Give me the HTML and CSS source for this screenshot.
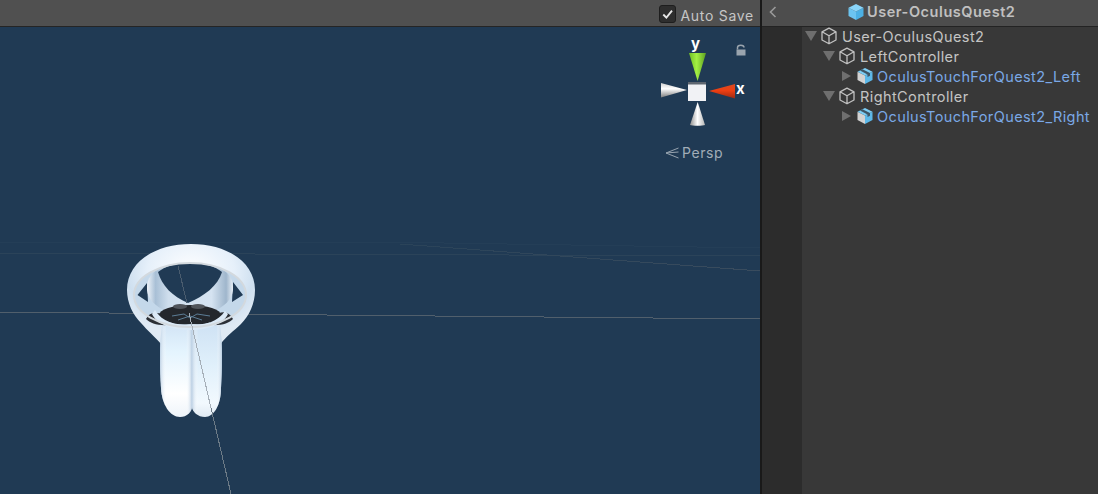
FILE: index.html
```html
<!DOCTYPE html>
<html lang="en">
<head>
<meta charset="utf-8">
<title>User-OculusQuest2</title>
<link rel="stylesheet" href="styles.css">
</head>
<body>
<svg class="defs" width="0" height="0" aria-hidden="true">
  <defs>
    <symbol id="cube" viewBox="0 0 18 18">
      <path d="M9 1.200 16 4.800V13L9 16.800 2 13V4.800Z M2 4.800 9 8.800 16 4.800 M9 8.800V16.800" fill="none" stroke="#c2c2c2" stroke-width="1.300" stroke-linejoin="round"/>
    </symbol>
    <symbol id="prefab" viewBox="0 0 18 18">
      <path d="M9 8.500V17L16.500 13V4.800Z" fill="#5cb8e8"/>
      <path d="M1.500 4.800 9 8.500V17L1.500 13Z" fill="#d2d2d2"/>
      <path d="M1.500 4.800 9 1 16.500 4.800 9 8.500Z" fill="#7ccdf4"/>
      <path d="M4 3.600 11.500 7.400V10L14 8.700V6L6.500 2.300Z" fill="#3d5566"/>
    </symbol>
    <symbol id="prefab-head" viewBox="0 0 18 18">
      <path d="M9 8.500V17L16.500 13V4.800Z" fill="#4cb0e4"/>
      <path d="M1.500 4.800 9 8.500V17L1.500 13Z" fill="#6cc4f0"/>
      <path d="M1.500 4.800 9 1 16.500 4.800 9 8.500Z" fill="#8ad6fa"/>
    </symbol>
    <linearGradient id="fadeLine" gradientUnits="userSpaceOnUse" x1="400" y1="0" x2="760" y2="0">
      <stop offset="0" stop-color="#2a4359"/>
      <stop offset="1" stop-color="#3a4c5e"/>
    </linearGradient>
    <radialGradient id="ringGrad" cx=".5" cy=".28" r=".62">
      <stop offset="0" stop-color="#ffffff"/>
      <stop offset=".55" stop-color="#e6f0fa"/>
      <stop offset=".8" stop-color="#cfe0f0"/>
      <stop offset="1" stop-color="#e0eaf4"/>
    </radialGradient>
    <linearGradient id="bandGrad" x1="0" y1="0" x2="1" y2="0">
      <stop offset="0" stop-color="#eef3f9"/>
      <stop offset=".1" stop-color="#a9c0d6"/>
      <stop offset=".25" stop-color="#cfdeed"/>
      <stop offset=".75" stop-color="#d5e3f1"/>
      <stop offset=".92" stop-color="#9fb6cc"/>
      <stop offset="1" stop-color="#e8eff6"/>
    </linearGradient>
    <linearGradient id="lobeL" x1="0" y1="0" x2="0" y2="1">
      <stop offset="0" stop-color="#d2e4f5"/>
      <stop offset=".3" stop-color="#e4f4fe"/>
      <stop offset=".75" stop-color="#ffffff"/>
      <stop offset="1" stop-color="#eef4fa"/>
    </linearGradient>
    <linearGradient id="lobeSide" x1="0" y1="0" x2="1" y2="0">
      <stop offset="0" stop-color="#c0d3e6"/>
      <stop offset=".2" stop-color="#ffffff" stop-opacity="0"/>
      <stop offset=".82" stop-color="#ffffff" stop-opacity="0"/>
      <stop offset="1" stop-color="#b8cde2"/>
    </linearGradient>
    <linearGradient id="lobeR" x1="0" y1="0" x2="0" y2="1">
      <stop offset="0" stop-color="#cfe2f4"/>
      <stop offset=".45" stop-color="#e0f0fb"/>
      <stop offset=".85" stop-color="#f2f9fe"/>
      <stop offset="1" stop-color="#e0eaf3"/>
    </linearGradient>
    <linearGradient id="coneG" x1="0" y1="0" x2="1" y2="0">
      <stop offset="0" stop-color="#6fbf26"/>
      <stop offset=".45" stop-color="#a3f043"/>
      <stop offset="1" stop-color="#5c9e22"/>
    </linearGradient>
    <linearGradient id="coneR" x1="0" y1="0" x2="0" y2="1">
      <stop offset="0" stop-color="#d84a20"/>
      <stop offset=".45" stop-color="#ee3f12"/>
      <stop offset="1" stop-color="#9c2a12"/>
    </linearGradient>
    <linearGradient id="coneW" x1="0" y1="0" x2="0" y2="1">
      <stop offset="0" stop-color="#cfcfcf"/>
      <stop offset=".4" stop-color="#ffffff"/>
      <stop offset="1" stop-color="#7d7d7d"/>
    </linearGradient>
    <linearGradient id="coneB" x1="0" y1="0" x2="1" y2="0">
      <stop offset="0" stop-color="#8f8f8f"/>
      <stop offset=".5" stop-color="#ffffff"/>
      <stop offset="1" stop-color="#b5b5b5"/>
    </linearGradient>
  </defs>
</svg>

<main class="editor">
  <section class="scene-pane">
    <header class="scene-toolbar">
      <span class="checkbox">
        <svg viewBox="0 0 16 16" width="16" height="16"><path d="M3.500 8.500 6.800 11.800 12.800 4.500" fill="none" stroke="#e8e8e8" stroke-width="2"/></svg>
      </span>
      <span class="autosave">Auto Save</span>
    </header>
    <div class="viewport">
      <svg class="world" viewBox="0 0 760 467" width="760" height="467">
        <g transform="translate(0 -27)" fill="none">
          <g shape-rendering="crispEdges">
            <path d="M0 242H380L760 248" stroke="#243e57"/>
            <path d="M0 253 760 256" stroke="#2b4359"/>
            <path d="M400 244 760 271" stroke="url(#fadeLine)"/>
            <path d="M0 312 760 319" stroke="#515f6c"/>
          </g>

          <!-- outer ring body with shoulders -->
          <path fill="url(#ringGrad)" d="M127 290C127 262 155 244 191 244S255 262 255 290C255 304 249 316 241 324 234 331 226 336 220 345H162C154 336 147 330 141 323 133 315 127 303 127 290Z"/>
          <!-- interior seen through the rim -->
          <ellipse cx="190" cy="295" rx="56" ry="32" fill="#c4d8ea"/>
          <path d="M137.500 295 147 283 148 302Z M243 295 233 282 232 302Z" fill="#203a54"/>

          <!-- back band and its opening -->
          <path d="M147 290C146 272 160 264 190 263 220 264 234 272 233 290 232 300 224 306 215 311H165C156 306 148 300 147 290Z" fill="url(#bandGrad)"/>
          <path d="M158 272C172 260 208 260 222 272 218 286 204 296 188 303 172 296 162 286 158 272Z" fill="#203a54"/>
          <path d="M178 266 187 303" stroke="#4a5c6e" shape-rendering="crispEdges"/>

          <!-- dark face -->
          <path d="M146 319C150 311 158 311 166 317L169 325C158 326 150 323 146 319Z M233 319C229 311 222 310 213 316L209 325C222 326 229 323 233 319Z" fill="#2c2f35"/>
          <ellipse cx="190" cy="315" rx="31" ry="10" fill="#24272c"/>
          <ellipse cx="180" cy="306.500" rx="7" ry="2.500" fill="#50545a"/>
          <ellipse cx="198" cy="306.500" rx="7" ry="2.500" fill="#50545a"/>
          <path d="M172 316 184 314 190 318 197 314 210 316M178 320 190 316 202 320" stroke="#5c7d96"/>

          <!-- handle lobes -->
          <path d="M162 326C159 345 160 370 161 388 162 405 170 417 180 417 187 417 192 412 192 406V324Z" fill="url(#lobeL)"/>
          <path d="M162 326C159 345 160 370 161 388 162 405 170 417 180 417 187 417 192 412 192 406V324Z" fill="url(#lobeSide)"/>
          <path d="M192 324V406C192 412 198 417 205 417 214 417 221 405 221 388 222 370 223 345 220 326Z" fill="url(#lobeR)"/>
          <path d="M192 324V406C192 412 198 417 205 417 214 417 221 405 221 388 222 370 223 345 220 326Z" fill="url(#lobeSide)"/>

          <!-- front lip and rim -->
          <path d="M155 310C162 322 175 325 190 325S218 322 225 311L228 314C222 326 205 330 190 330S158 326 152 314Z" fill="#dbe9f6"/>
          <ellipse cx="190" cy="295" rx="56" ry="32" stroke="#d3d9de" stroke-width="2"/>

          <g shape-rendering="crispEdges">
            <path d="M189 313 211 408" stroke="#a6afb8"/>
            <path d="M211 408 231 494" stroke="#6d7b87"/>
          </g>
        </g>
      </svg>

      <div class="gizmo">
        <svg class="gizmo-art" viewBox="0 0 90 90" width="90" height="90">
          <g transform="translate(-658 -49)">
            <path d="M689 53H706L697.600 81Z" fill="url(#coneG)"/>
            <path d="M735 84V98.500L709 91Z" fill="url(#coneR)"/>
            <path d="M661 83V97.500L687 90Z" fill="url(#coneW)"/>
            <path d="M690 125C692 126 703 126 705 125L697.700 102Z" fill="url(#coneB)"/>
            <rect x="688" y="82" width="18" height="19" fill="#f1f2f5"/>
            <rect x="688" y="82" width="18" height="2.500" fill="#5e6670"/>
          </g>
        </svg>
        <span class="axis axis-y">y</span>
        <span class="axis axis-x">x</span>
        <svg class="lock" viewBox="0 0 10 12" width="10" height="12">
          <path d="M1.500 5.500V3.500C1.500 .4 8 .4 8 3.500" fill="none" stroke="#9aa4ae" stroke-width="1.500"/>
          <rect x="0.500" y="5.500" width="9" height="6" fill="#9aa4ae"/>
        </svg>
        <div class="persp">
          <svg viewBox="0 0 14 12" width="14" height="12"><path d="M13.500 1 1 6 13.500 11M13.500 5 1 6" fill="none" stroke="#97a3af" stroke-width="1"/></svg>
          <span>Persp</span>
        </div>
      </div>
    </div>
  </section>

  <section class="hierarchy-pane">
    <header class="hierarchy-header">
      <svg class="back" viewBox="0 0 8 12" width="8" height="12"><path d="M6.500 1 1.500 6 6.500 11" fill="none" stroke="#9a9a9a" stroke-width="1.600"/></svg>
      <div class="crumb">
        <svg viewBox="0 0 18 18" width="18" height="18"><use href="#prefab-head"/></svg>
        <span>User-OculusQuest2</span>
      </div>
    </header>
    <div class="hierarchy-body">
      <div class="gutter"></div>
      <ul class="tree">
        <li class="row depth-0"><i class="tri tri-down"></i><svg class="ico" viewBox="0 0 18 18"><use href="#cube"/></svg><span>User-OculusQuest2</span></li>
        <li class="row depth-1"><i class="tri tri-down"></i><svg class="ico" viewBox="0 0 18 18"><use href="#cube"/></svg><span>LeftController</span></li>
        <li class="row depth-2 prefab"><i class="tri tri-right"></i><svg class="ico" viewBox="0 0 18 18"><use href="#prefab"/></svg><span>OculusTouchForQuest2_Left</span></li>
        <li class="row depth-1"><i class="tri tri-down"></i><svg class="ico" viewBox="0 0 18 18"><use href="#cube"/></svg><span>RightController</span></li>
        <li class="row depth-2 prefab"><i class="tri tri-right"></i><svg class="ico" viewBox="0 0 18 18"><use href="#prefab"/></svg><span>OculusTouchForQuest2_Right</span></li>
      </ul>
    </div>
  </section>
</main>
</body>
</html>
```

FILE: styles.css
```css
* { box-sizing: border-box; }
html, body { margin: 0; height: 100%; overflow: hidden; }
body { background: #191919; font-family: Inter, "Noto Sans", sans-serif; font-size: 14px; }
.defs { display: block; position: absolute; }

.editor { display: flex; height: 494px; width: 1098px; }

.scene-pane { width: 760px; display: flex; flex-direction: column; flex: none; }
.scene-toolbar {
  height: 27px; flex: none; background: #505050; border-bottom: 1px solid #252525;
  display: flex; align-items: center; justify-content: flex-end;
  padding: 2px 7px 0 0; gap: 4px;
}
.checkbox {
  width: 17px; height: 18px; background: #2e2e2e; border-radius: 3px; border: 1px solid #1e1e1e;
  display: flex; align-items: center; justify-content: center;
}
.autosave { color: #c6c6c6; letter-spacing: .72px; line-height: 18px; margin-top: 4px; margin-right: -1px; }

.viewport { flex: 1; background: #203a54; position: relative; overflow: hidden; }
.world { display: block; }

.gizmo { position: absolute; left: 658px; top: 8px; width: 96px; height: 130px; }
.gizmo-art { position: absolute; left: 0; top: 14px; }
.axis { position: absolute; color: #fff; font-weight: 700; font-size: 15px; line-height: 16px; }
.axis-y { left: 33px; top: 1px; }
.axis-x { left: 78px; top: 46px; }
.lock { position: absolute; left: 78px; top: 9px; }
.persp { position: absolute; left: 7px; top: 110px; display: flex; align-items: center; gap: 3px; color: #a2adb8; letter-spacing: .6px; line-height: 16px; }

.hierarchy-pane { margin-left: 2px; flex: 1; display: flex; flex-direction: column; min-width: 0; }
.hierarchy-header {
  height: 27px; flex: none; background: #4d4d4d; border-bottom: 1px solid #232323;
  display: flex; align-items: center; position: relative; padding-bottom: 3px;
}
.back { position: absolute; left: 7px; top: 6px; }
.crumb { display: flex; align-items: center; gap: 2px; margin-left: 85px; color: #c0c0c0; font-weight: 600; font-size: 14.500px; letter-spacing: .55px; }

.hierarchy-body { flex: 1; display: flex; background: #383838; }
.gutter { width: 40px; background: #2c2c2c; flex: none; }
.tree { list-style: none; margin: 0; padding: 0; flex: 1; }
.row { height: 20px; padding-bottom: 2px; display: flex; align-items: center; color: #c4c4c4; white-space: nowrap; font-size: 14.500px; letter-spacing: .4px; }
.row.prefab { color: #7aa8e6; }
.depth-0 { padding-left: 3px; }
.depth-1 { padding-left: 21px; }
.depth-2 { padding-left: 40px; }
.tri { display: block; flex: none; width: 14px; height: 10px; margin-right: 2px; }
.tri-down { border-style: solid; border-width: 10px 6px 0; border-color: #6f6f6f transparent transparent; width: 12px; margin-right: 3px; }
.tri-right { border-style: solid; border-width: 5px 0 5px 9px; border-color: transparent transparent transparent #6f6f6f; width: 9px; margin-right: 5px; }
.ico { width: 18px; height: 18px; flex: none; margin-right: 4px; }
.prefab .ico { margin-right: 3px; }
```
